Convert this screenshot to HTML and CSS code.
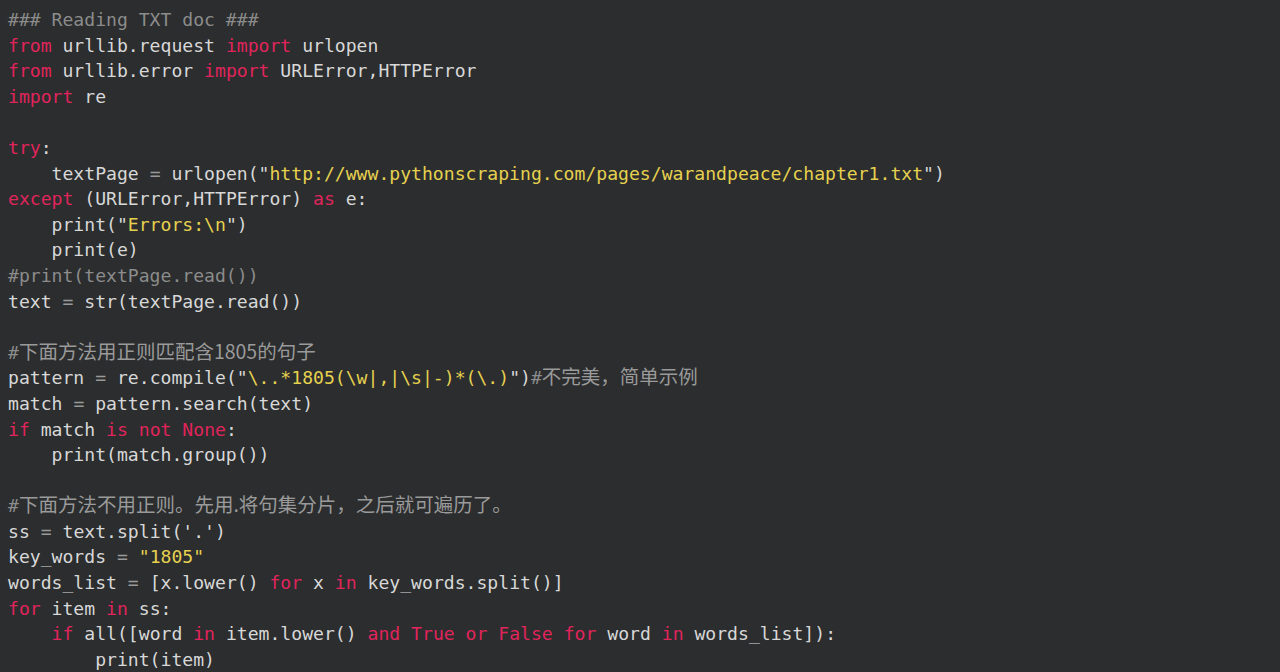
FILE: index.html
```html
<!DOCTYPE html>
<html lang="zh">
<head>
<meta charset="utf-8">
<title>Reading TXT doc</title>
<link rel="stylesheet" href="styles.css">
</head>
<body>
<main class="editor">
<div class="code">
<div class="line"><span class="c">### Reading TXT doc ###</span></div>
<div class="line"><span class="k">from</span> urllib.request <span class="k">import</span> urlopen</div>
<div class="line"><span class="k">from</span> urllib.error <span class="k">import</span> URLError,HTTPError</div>
<div class="line"><span class="k">import</span> re</div>
<div class="line"></div>
<div class="line"><span class="k">try</span>:</div>
<div class="line">    textPage <span class="o">=</span> urlopen("<span class="s">http://www.pythonscraping.com/pages/warandpeace/chapter1.txt</span>")</div>
<div class="line"><span class="k">except</span> (URLError,HTTPError) <span class="k">as</span> e:</div>
<div class="line">    print("<span class="s">Errors:\n</span>")</div>
<div class="line">    print(e)</div>
<div class="line"><span class="c">#print(textPage.read())</span></div>
<div class="line">text <span class="o">=</span> str(textPage.read())</div>
<div class="line"></div>
<div class="line"><span class="c">#<span class="cjk">下面方法用正则匹配含1805的句子</span></span></div>
<div class="line">pattern <span class="o">=</span> re.compile("<span class="s">\..*1805(\w|,|\s|-)*(\.)</span>")<span class="c">#<span class="cjk">不完美，简单示例</span></span></div>
<div class="line">match <span class="o">=</span> pattern.search(text)</div>
<div class="line"><span class="k">if</span> match <span class="k">is</span> <span class="k">not</span> <span class="k">None</span>:</div>
<div class="line">    print(match.group())</div>
<div class="line"></div>
<div class="line"><span class="c">#<span class="cjk">下面方法不用正则。先用.将句集分片，之后就可遍历了。</span></span></div>
<div class="line">ss <span class="o">=</span> text.split('.')</div>
<div class="line">key_words <span class="o">=</span> <span class="s">"1805"</span></div>
<div class="line">words_list <span class="o">=</span> [x.lower() <span class="k">for</span> x <span class="k">in</span> key_words.split()]</div>
<div class="line"><span class="k">for</span> item <span class="k">in</span> ss:</div>
<div class="line">    <span class="k">if</span> all([word <span class="k">in</span> item.lower() <span class="k">and</span> <span class="k">True</span> <span class="k">or</span> <span class="k">False</span> <span class="k">for</span> word <span class="k">in</span> words_list]):</div>
<div class="line">        print(item)</div>
</div>
</main>
</body>
</html>
```
FILE: styles.css
```css
html, body {
  margin: 0;
  padding: 0;
  background: #2b2d2e;
}

.editor {
  width: 1280px;
  height: 672px;
  overflow: hidden;
  background: #2b2d2e;
  padding: 7px 0 0 8px;
  box-sizing: border-box;
}

.code {
  font-family: "DejaVu Sans Mono", "Liberation Mono", monospace;
  font-size: 18.1px;
  color: #d8d8d8;
  display: flex;
  flex-direction: column;
}

.line {
  height: 25.6px;
  line-height: 25.6px;
  white-space: pre;
  overflow: visible;
}

.k {
  color: #e0245c;
}

.s {
  color: #e6d14f;
}

.c {
  color: #8c8c8c;
}

.o {
  color: #9a9a9a;
}

.cjk {
  font-family: "Noto Sans CJK SC", sans-serif;
  font-size: 19.5px;
  line-height: 1;
  color: #9a9a9a;
}
```
